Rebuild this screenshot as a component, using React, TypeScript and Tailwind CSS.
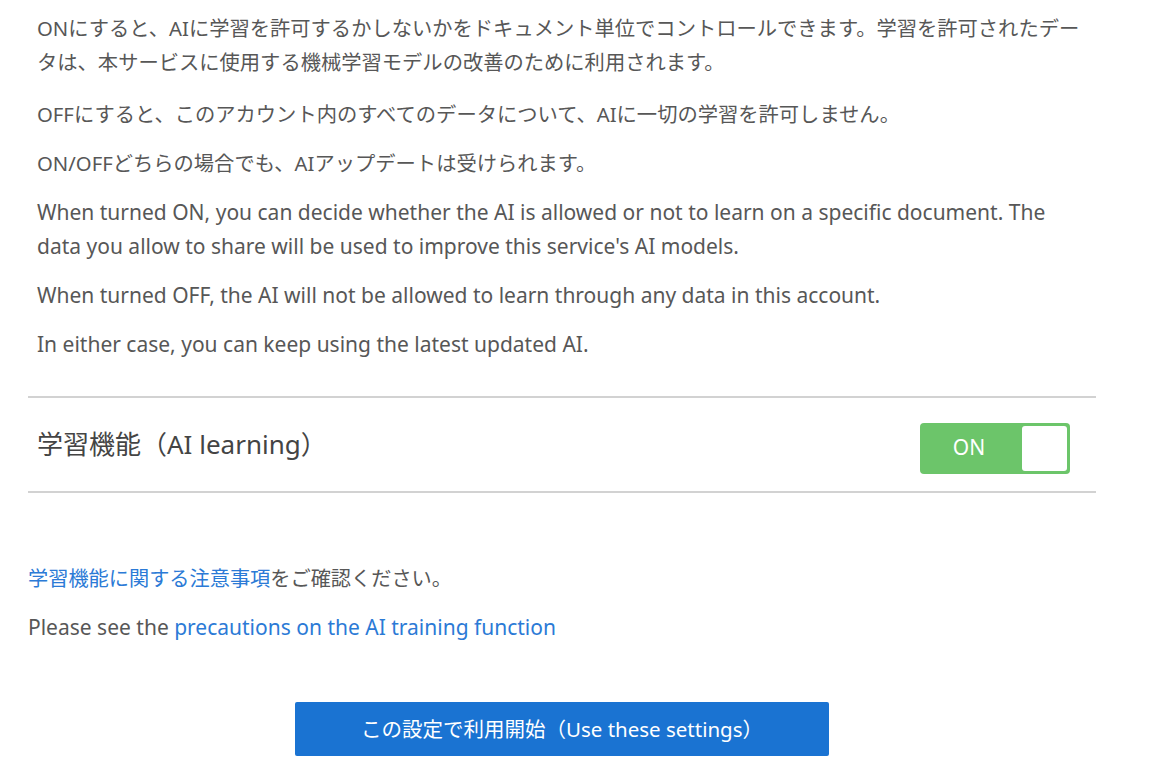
import React from 'react';

const font = { fontFamily: '"Noto Sans", "Noto Sans CJK JP", sans-serif' };

const paragraphs = [
  { ja: true, text: 'ONにすると、AIに学習を許可するかしないかをドキュメント単位でコントロールできます。学習を許可されたデータは、本サービスに使用する機械学習モデルの改善のために利用されます。' },
  { ja: true, text: 'OFFにすると、このアカウント内のすべてのデータについて、AIに一切の学習を許可しません。' },
  { ja: true, text: 'ON/OFFどちらの場合でも、AIアップデートは受けられます。' },
  { ja: false, text: "When turned ON, you can decide whether the AI is allowed or not to learn on a specific document. The data you allow to share will be used to improve this service's AI models." },
  { ja: false, text: 'When turned OFF, the AI will not be allowed to learn through any data in this account.' },
  { ja: false, text: 'In either case, you can keep using the latest updated AI.' },
];

const Toggle: React.FC<{ on: boolean }> = ({ on }) => (
  <div className="mt-[7px] flex h-[51px] w-[150px] items-stretch rounded-[4px] bg-[#6cc56a] p-[3px]">
    <span className="flex flex-1 items-center justify-center pr-[7px] text-[21px] text-white">
      {on ? 'ON' : 'OFF'}
    </span>
    <span className="w-[45px] rounded-[3px] bg-white" />
  </div>
);

export default function App() {
  return (
    <div className="h-[767px] w-[1156px] overflow-hidden bg-white text-[#575757]" style={font}>
      <div className="ml-[28px] w-[1068px]">
        <div className="px-[9px] pt-[11px] leading-[34px]">
          {paragraphs.map((p, i) => (
            <p
              key={i}
              className={
                (p.ja ? 'text-[20.3px] ' : 'text-[21px] ') +
                (i === 0 ? 'mb-[18px]' : i === paragraphs.length - 1 ? 'mb-0' : 'mb-[15px]')
              }
            >
              {p.text}
            </p>
          ))}
        </div>

        <div className="mt-[35px] flex h-[97px] items-center justify-between border-y-2 border-[#d2d2d2] pl-[9px] pr-[26px]">
          <h2 className="pb-[2px] text-[26px] leading-none text-[#444]">学習機能（AI learning）</h2>
          <Toggle on />
        </div>

        <div className="mt-[68px] leading-[34px]">
          <p className="mb-[15px] text-[20.2px]">
            <a className="text-[#2b7ad6]">学習機能に関する注意事項</a>をご確認ください。
          </p>
          <p className="text-[21px]">
            Please see the <a className="text-[#2b7ad6]">precautions on the AI training function</a>
          </p>
        </div>
      </div>

      <div className="mt-[58px] flex justify-center pr-[32px]">
        <button className="h-[54px] w-[534px] rounded-[2px] bg-[#1a73d2] text-[20.5px] text-white">
          この設定で利用開始（Use these settings）
        </button>
      </div>
    </div>
  );
}
